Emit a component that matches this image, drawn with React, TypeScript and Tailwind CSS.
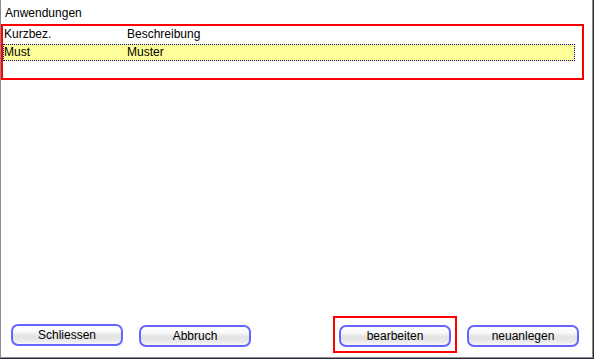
const rows = [{ kurz: 'Must', text: 'Muster' }];

function WinButton({ label }: { label: string }) {
  return (
    <button className="h-[22px] w-[112px] rounded-[7px] border-2 border-[#6666ff] bg-[linear-gradient(to_bottom,#ffffff_0%,#fafafa_30%,#e2e2e2_55%,#eaeaea_80%,#f8f8f8_100%)] text-[12px] leading-[18px] text-black">
      {label}
    </button>
  );
}

export default function App() {
  return (
    <div className="h-[359px] w-[594px] bg-[#2a2a3e] font-['Liberation_Sans',Arial,sans-serif]">
      <div className="flex h-[358px] w-[593px] flex-col border-x border-b border-[#8c8c8c] bg-white">
        <div className="pl-[4px] pt-[6px] text-[12px] leading-[14px] text-black">Anwendungen</div>

        {/* table */}
        <div className="mt-[4px] h-[56px] w-[583px] border-2 border-[#ff0000] text-[12px] text-black">
          <div className="flex h-[18px] pl-[1px] pt-[1px] leading-[14px]">
            <span className="w-[123px]">Kurzbez.</span>
            <span>Beschreibung</span>
          </div>
          {rows.map((r) => (
            <div
              key={r.kurz}
              className="flex h-[17px] w-[572px] border border-dotted border-[#000080] bg-[#ffff99] leading-[15px]"
            >
              <span className="w-[123px]">{r.kurz}</span>
              <span>{r.text}</span>
            </div>
          ))}
        </div>

        <div className="flex-1" />

        {/* buttons */}
        <div className="flex items-center pb-[4px] pl-[10px]">
          <WinButton label="Schliessen" />
          <div className="ml-[16px]">
            <WinButton label="Abbruch" />
          </div>
          <div className="ml-[82px] border-2 border-[#ff0000] pb-[4px] pl-[4px] pr-[4px] pt-[5px]">
            <WinButton label="bearbeiten" />
          </div>
          <div className="ml-[10px]">
            <WinButton label="neuanlegen" />
          </div>
        </div>
      </div>
    </div>
  );
}
